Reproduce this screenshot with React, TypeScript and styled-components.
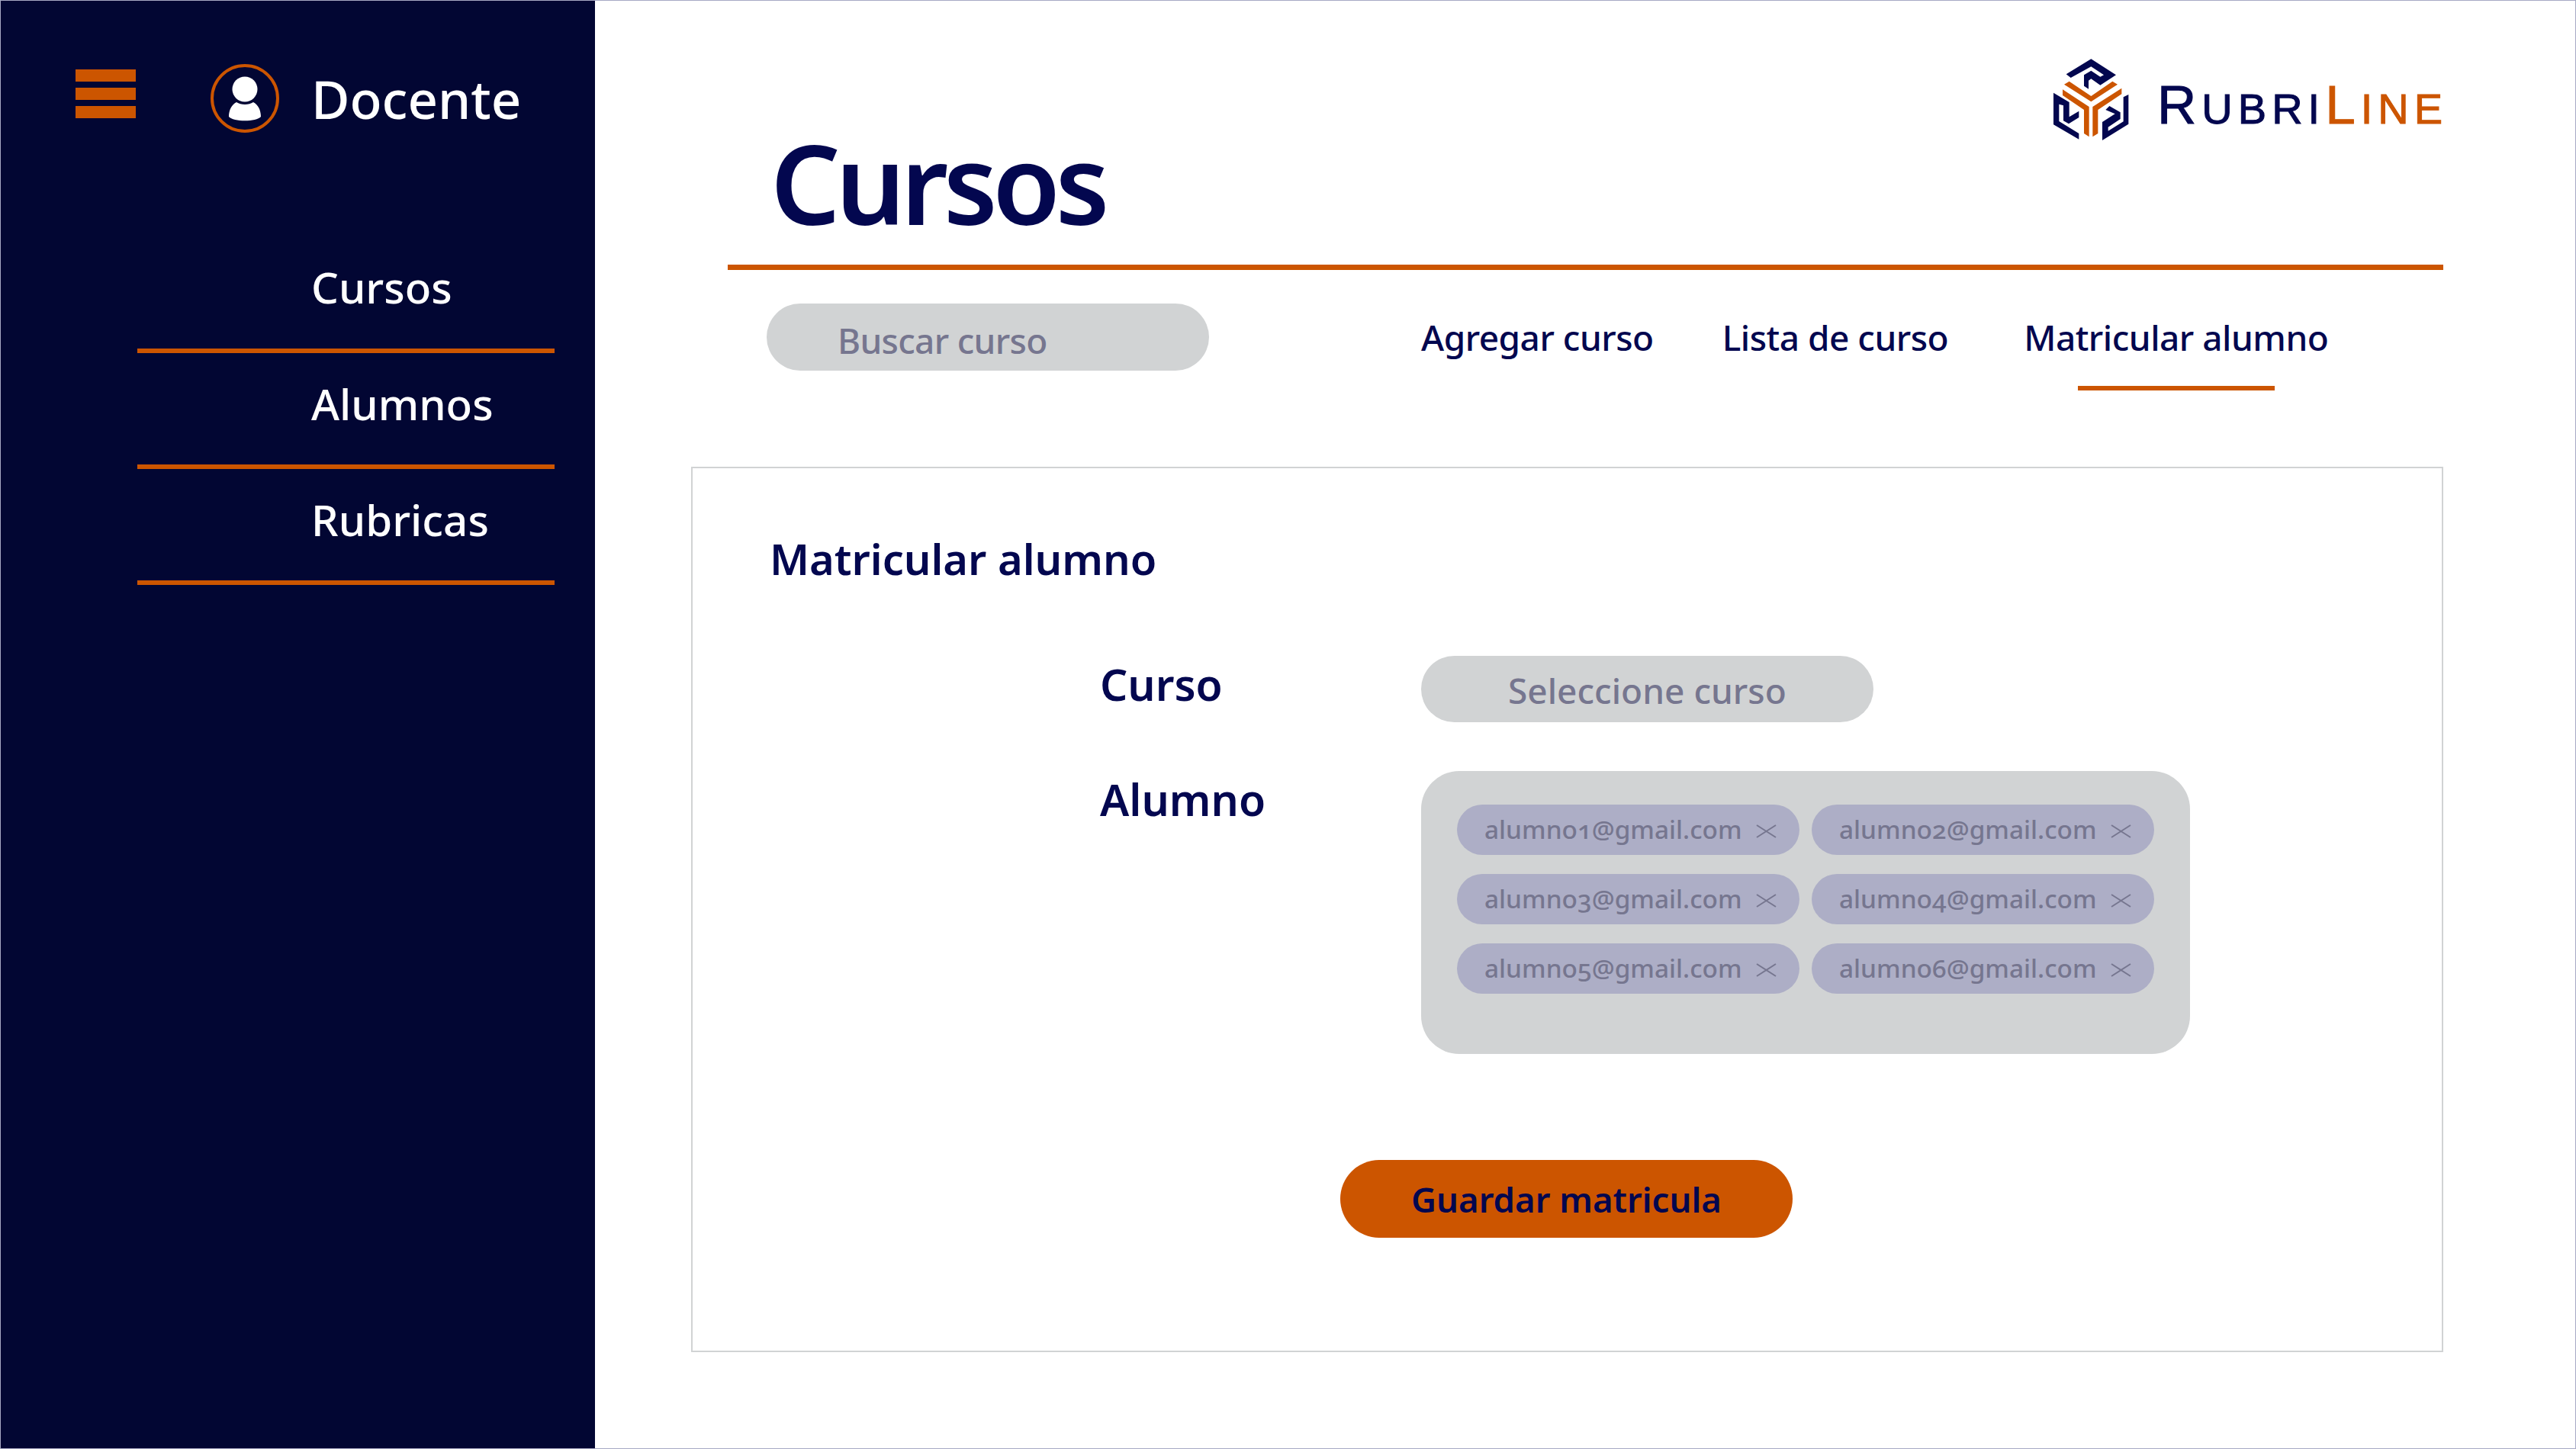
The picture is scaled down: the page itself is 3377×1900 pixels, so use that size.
import React from "react";
import styled, { createGlobalStyle } from "styled-components";

const NAVY = "#020633";
const INK = "#03074f";
const ORANGE = "#cc5500";
const GREY = "#d1d3d4";
const MUTED = "#76768f";

const GlobalStyle = createGlobalStyle`
  html, body {
    margin: 0;
    background: #fff;
    overflow: hidden;
  }
  * {
    box-sizing: border-box;
  }
`;

const Page = styled.div`
  width: 3377px;
  height: 1900px;
  display: flex;
  font-family: "Noto Sans", "Open Sans", sans-serif;
  font-feature-settings: "onum";
  border: 1px solid #a7a9c4;
`;

const Sidebar = styled.aside`
  width: 779px;
  flex: none;
  background: ${NAVY};
  color: #fff;
  padding: 82px 53px 0 98px;
`;

const UserRow = styled.div`
  display: flex;
  align-items: center;
  height: 92px;
`;

const Burger = styled.div`
  width: 79px;
  display: flex;
  flex-direction: column;
  gap: 8px;
  margin-right: 98px;
  margin-top: -12px;
  span {
    height: 16px;
    background: ${ORANGE};
  }
`;

const UserName = styled.div`
  margin-left: 42px;
  font-size: 69px;
  font-weight: 500;
  line-height: 92px;
`;

const SideNav = styled.nav`
  margin-top: 157px;
  padding-left: 81px;
  display: flex;
  flex-direction: column;
`;

const SideItem = styled.a`
  height: 152px;
  padding-left: 228px;
  font-size: 56.5px;
  font-weight: 500;
  line-height: 134px;
  border-bottom: 6px solid ${ORANGE};
  &:first-child {
    height: 131px;
    line-height: 90px;
  }
`;

const Main = styled.main`
  flex: 1;
  padding: 0 173px 0 174px;
  color: ${INK};
`;

const Header = styled.header`
  height: 353px;
  border-bottom: 7px solid ${ORANGE};
  display: flex;
  justify-content: space-between;
  padding-left: 56px;
`;

const Title = styled.h1`
  margin: 150px 0 0;
  font-size: 144px;
  font-weight: 560;
  line-height: 176px;
  letter-spacing: -6.5px;
`;

const Brand = styled.div`
  display: flex;
  align-items: center;
  height: 130px;
  margin-top: 69px;
`;

const Wordmark = styled.div`
  margin: 10px -6px 0 16px;
  display: flex;
  align-items: baseline;
  font-family: "Liberation Sans", sans-serif;
  font-size: 56px;
  line-height: 60px;
  letter-spacing: 7px;
  color: ${INK};
  -webkit-text-stroke: 1px currentColor;
`;

const Cap = styled.span`
  font-size: 71px;
`;

const WordEnd = styled.span`
  color: ${ORANGE};
`;

const Toolbar = styled.div`
  height: 258px;
  display: flex;
  padding: 44px 0 0 51px;
`;

const SearchPill = styled.div`
  width: 580px;
  height: 88px;
  border-radius: 44px;
  background: ${GREY};
  color: ${MUTED};
  padding-left: 93px;
  font-size: 46px;
  font-weight: 500;
  letter-spacing: -0.7px;
  line-height: 96px;
`;

const Tabs = styled.nav`
  margin-left: 278px;
  display: flex;
  gap: 90px;
`;

const Tab = styled.a<{ $active?: boolean }>`
  position: relative;
  margin-left: ${(p) => (p.$active ? "9px" : "0")};
  font-size: 46px;
  font-weight: 500;
  letter-spacing: -0.5px;
  line-height: 88px;
  height: 88px;
  &::after {
    content: "";
    display: ${(p) => (p.$active ? "block" : "none")};
    position: absolute;
    left: 50%;
    top: 108px;
    width: 258px;
    height: 6px;
    margin-left: -129px;
    background: ${ORANGE};
  }
`;

const Card = styled.section`
  margin-left: -48px;
  height: 1161px;
  border: 2px solid ${GREY};
  padding: 78px 0 0 101px;
`;

const CardTitle = styled.h2`
  margin: 0;
  font-size: 56px;
  font-weight: 600;
  line-height: 80px;
`;

const Form = styled.div`
  margin-top: 88px;
  margin-left: 433px;
  display: grid;
  grid-template-columns: 421px 1008px;
  row-gap: 64px;
`;

const Label = styled.label`
  font-size: 57px;
  font-weight: 600;
  line-height: 74px;
`;

const SelectPill = styled.div`
  width: 593px;
  height: 87px;
  border-radius: 44px;
  background: ${GREY};
  color: ${MUTED};
  padding-left: 114px;
  font-size: 46px;
  font-weight: 500;
  line-height: 90px;
`;

const ChipBox = styled.div`
  height: 371px;
  border-radius: 50px;
  background: ${GREY};
  padding: 44px 47px 0;
  display: grid;
  grid-template-columns: 449px 449px;
  grid-auto-rows: 66px;
  gap: 25px 16px;
`;

const Chip = styled.div`
  border-radius: 33px;
  background: #adaec6;
  color: ${MUTED};
  display: flex;
  align-items: center;
  padding: 0 0 3px 36px;
  font-size: 33.4px;
  font-weight: 500;
  white-space: nowrap;
`;

const ChipClose = styled.svg`
  position: relative;
  margin-left: auto;
  margin-right: 30px;
  flex: none;
  top: 3px;
`;

const Actions = styled.div`
  margin-top: 139px;
  margin-left: 748px;
`;

const SaveButton = styled.button`
  width: 593px;
  height: 102px;
  border: 0;
  border-radius: 51px;
  background: ${ORANGE};
  color: ${INK};
  font-family: inherit;
  font-size: 45.5px;
  font-weight: 600;
`;

function UserIcon() {
  return (
    <svg width="90" height="90" viewBox="0 0 90 90">
      <circle cx="45" cy="45" r="43" fill="none" stroke={ORANGE} strokeWidth="4" />
      <circle cx="45" cy="33" r="16.5" fill="#fff" />
      <path d="M34 50 C40 54 50 54 56 50 C62 53 66 60 66 69 C60 76 30 76 24 69 C24 60 28 53 34 50 Z" fill="#fff" />
    </svg>
  );
}

function Logo() {
  return (
    <svg width="130" height="130" viewBox="0 0 390 390">
      <g fill={INK}>
        <polygon points="80,82 178,22 276,85 214,125 178,100 168,107 168,140 150,128 150,85 178,68 214,92 228,85 178,52 98,96" />
        <polygon points="30,155 92,192 92,250 130,227 130,252 90,277 69,265 69,205 52,200 52,267 130,315 130,338 30,280" />
        <polygon points="325,162 325,278 222,342 222,270 272,238 235,222 250,207 293,232 293,258 245,290 245,305 305,268 305,172" />
      </g>
      <g fill={ORANGE}>
        <polygon points="72,122 92,110 178,168 262,110 282,122 178,190" />
        <polygon points="66,142 170,210 170,328 150,315 150,222 66,165" />
        <polygon points="298,137 298,160 205,222 205,315 184,328 184,210" />
      </g>
    </svg>
  );
}

function CloseMark() {
  return (
    <ChipClose width="27" height="18" viewBox="0 0 27 18">
      <path d="M1 1 L26 17 M26 1 L1 17" stroke={MUTED} strokeWidth="2" fill="none" />
    </ChipClose>
  );
}

const students = [
  "alumno1@gmail.com",
  "alumno2@gmail.com",
  "alumno3@gmail.com",
  "alumno4@gmail.com",
  "alumno5@gmail.com",
  "alumno6@gmail.com",
];

export default function App() {
  return (
    <Page>
      <GlobalStyle />
      <Sidebar>
        <UserRow>
          <Burger>
            <span />
            <span />
            <span />
          </Burger>
          <UserIcon />
          <UserName>Docente</UserName>
        </UserRow>
        <SideNav>
          <SideItem>Cursos</SideItem>
          <SideItem>Alumnos</SideItem>
          <SideItem>Rubricas</SideItem>
        </SideNav>
      </Sidebar>
      <Main>
        <Header>
          <Title>Cursos</Title>
          <Brand>
            <Logo />
            <Wordmark>
              <Cap>R</Cap>UBRI
              <WordEnd>
                <Cap>L</Cap>INE
              </WordEnd>
            </Wordmark>
          </Brand>
        </Header>
        <Toolbar>
          <SearchPill>Buscar curso</SearchPill>
          <Tabs>
            <Tab>Agregar curso</Tab>
            <Tab>Lista de curso</Tab>
            <Tab $active>Matricular alumno</Tab>
          </Tabs>
        </Toolbar>
        <Card>
          <CardTitle>Matricular alumno</CardTitle>
          <Form>
            <Label>Curso</Label>
            <SelectPill>Seleccione curso</SelectPill>
            <Label>Alumno</Label>
            <ChipBox>
              {students.map((mail) => (
                <Chip key={mail}>
                  {mail}
                  <CloseMark />
                </Chip>
              ))}
            </ChipBox>
          </Form>
          <Actions>
            <SaveButton>Guardar matricula</SaveButton>
          </Actions>
        </Card>
      </Main>
    </Page>
  );
}
